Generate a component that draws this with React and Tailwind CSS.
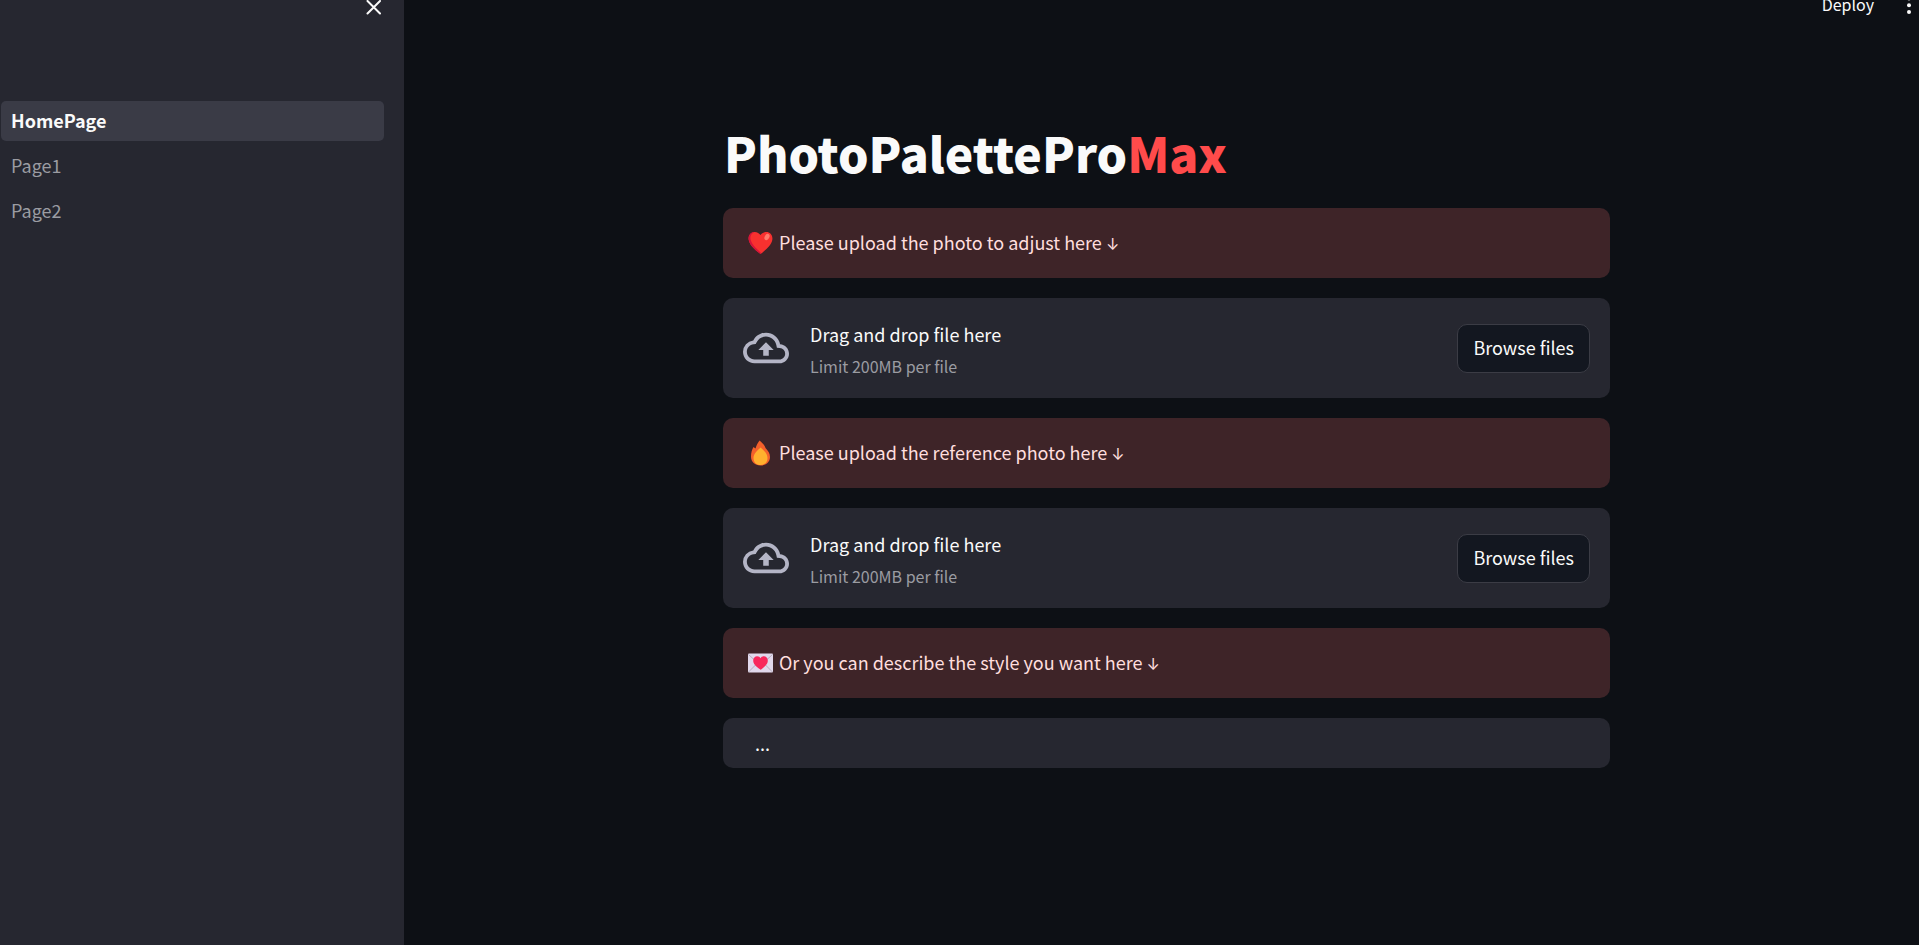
import React from "react";

const pages = [
  { name: "HomePage", active: true },
  { name: "Page1", active: false },
  { name: "Page2", active: false },
];

function CloseIcon() {
  return (
    <svg viewBox="0 0 16 16" className="h-4 w-4" fill="none" stroke="currentColor" strokeWidth="2" strokeLinecap="round">
      <path d="M1.500 1 14 13.500M14 1 1.500 13.500" />
    </svg>
  );
}

function KebabIcon() {
  return (
    <svg viewBox="0 0 6 15" className="h-[15px] w-[6px]" fill="currentColor">
      <circle cx="3" cy="-1.6" r="2" />
      <circle cx="3" cy="5.2" r="2" />
      <circle cx="3" cy="12" r="2" />
    </svg>
  );
}

function HeartIcon() {
  return (
    <svg viewBox="0 0 25 24" className="h-6 w-[25px] shrink-0" aria-hidden="true">
      <path d="M12.5 23C10 21 1 14.500 0.600 8.200C0.300 3.700 3.300 1 6.500 1C9.300 1 11.400 2.500 12.500 4C13.600 2.500 15.700 1 18.500 1C21.700 1 24.700 3.700 24.400 8.200C24 14.500 15 21 12.500 23Z" fill="#f8312f" />
      <path d="M12.500 23C10 21 1 14.500 0.600 8.200C0.300 3.700 3.300 1 6.500 1C3 2.500 1.900 5.500 2.700 9C4.300 14.500 10 19 13.400 22.300Z" fill="#d5123a" />
      <ellipse cx="19" cy="6" rx="2.300" ry="3.300" transform="rotate(28 19 6)" fill="#ff7a6b" />
    </svg>
  );
}

function FireIcon() {
  return (
    <svg viewBox="0 0 25 26" className="h-[26px] w-[25px] shrink-0" aria-hidden="true">
      <path d="M11.500 0.500C15 3.500 16.500 5.500 17.500 8C19.800 10.500 22 13 22 17C22 22.300 17.800 25.500 12.500 25.500C7 25.500 3 22 3 16.500C3 12.500 4 9.500 5.500 7L7.500 8.500C8.500 5.500 9.500 3 11.500 0.500Z" fill="#f3602b" />
      <path d="M12.500 7.500C15.500 10 19.500 13.500 19.500 18C19.500 22.500 16.500 25 12.500 25C8.500 25 5.500 22.500 5.500 18C5.500 13.500 9.500 10.500 12.500 7.500Z" fill="#ffb02e" />
    </svg>
  );
}

function LoveLetterIcon() {
  return (
    <svg viewBox="0 0 25 20" className="h-5 w-[25px] shrink-0" aria-hidden="true">
      <rect x="0" y="0.500" width="25" height="19" rx="1" fill="#e1d8ec" />
      <path d="M0.500 1.500 12.500 12.500 24.500 1.500M0.500 19 9 10.500M24.500 19 16 10.500" fill="none" stroke="#b4acbc" strokeWidth="1" />
      <path d="M12.500 16.800C10.500 15.300 5.200 12 5.200 7.800C5.200 5 7 3.300 9.100 3.300C10.800 3.300 12 4.200 12.500 5.300C13 4.200 14.200 3.300 15.900 3.300C18 3.300 19.800 5 19.800 7.800C19.800 12 14.500 15.300 12.500 16.800Z" fill="#f8285c" />
    </svg>
  );
}

function CloudUploadIcon() {
  return (
    <svg viewBox="0 0 24 24" className="h-[46px] w-[46px] shrink-0 text-[#b4b5c6]" fill="currentColor" aria-hidden="true">
      <path d="M19.350 10.040A7.490 7.490 0 0 0 12 4C9.110 4 6.600 5.640 5.350 8.040A5.994 5.994 0 0 0 0 14c0 3.310 2.690 6 6 6h13c2.760 0 5-2.240 5-5 0-2.640-2.050-4.780-4.650-4.960zM19 18H6c-2.210 0-4-1.790-4-4 0-2.050 1.530-3.760 3.560-3.970l1.070-.110.500-.950A5.469 5.469 0 0 1 12 6c2.620 0 4.880 1.860 5.390 4.430l.300 1.500 1.530.110A2.980 2.980 0 0 1 22 15c0 1.650-1.350 3-3 3zM8 13h2.550v3h2.900v-3H16l-4-4z" />
    </svg>
  );
}

function Notice({ icon, htmlFor, children }) {
  return (
    <label htmlFor={htmlFor} className="flex h-[70px] items-center gap-1.5 rounded-[10px] bg-[#3e2428] px-[25px] text-[#ffdede]">
      {icon}
      <span className="pb-0.5">
        {children} <span className="font-['Inter',sans-serif] text-base">↓</span>
      </span>
    </label>
  );
}

function Uploader({ id }) {
  return (
    <section className="flex h-[100px] items-center rounded-[10px] bg-[#262730] px-5">
      <CloudUploadIcon />
      <div className="ml-[21px] flex flex-col gap-1 pt-[3px]">
        <span className="leading-7">Drag and drop file here</span>
        <small className="text-base leading-7 text-[#9b9ca2]">Limit 200MB per file</small>
      </div>
      <button id={id} type="button" className="ml-auto h-[49px] rounded-[10px] border border-[#3b3c45] bg-[#131720] px-[15px] pb-0.5">
        Browse files
      </button>
    </section>
  );
}

export default function App() {
  return (
    <div className="flex min-h-screen bg-[#0d1015] font-['Noto_Sans_CJK_SC',sans-serif] text-lg text-[#fafafa]">
      <aside className="w-[404px] shrink-0 bg-[#262730]">
        <div className="flex h-[101px] items-start justify-end pr-[22px]">
          <button type="button" aria-label="Close sidebar">
            <CloseIcon />
          </button>
        </div>
        <nav className="flex flex-col gap-[5px] pr-5 pl-px">
          {pages.map((page) => (
            <a
              key={page.name}
              href={"#" + page.name}
              className={
                page.active
                  ? "flex h-10 items-center rounded-[5px] bg-[#3a3b46] px-[10px] pb-0.5 font-bold"
                  : "flex h-10 items-center rounded-[5px] px-[10px] pb-0.5 text-[#9b9ca2]"
              }
            >
              {page.name}
            </a>
          ))}
        </nav>
      </aside>
      <div className="min-w-0 flex-1">
        <header className="flex h-[15px] items-start justify-end gap-[32px] pr-[7px]">
          <button type="button" className="text-base leading-[8px]">
            Deploy
          </button>
          <button type="button" aria-label="Main menu">
            <KebabIcon />
          </button>
        </header>
        <main className="pl-[10px]">
          <div className="mx-auto flex w-full max-w-[887px] flex-col gap-5">
            <h1 className="pt-[104px] pb-[3px] pl-px text-[48px] leading-[66px] font-black">
              PhotoPalettePro<span className="text-[#ff4b4b]">Max</span>
            </h1>
            <Notice icon={<HeartIcon />} htmlFor="photo">Please upload the photo to adjust here</Notice>
            <Uploader id="photo" />
            <Notice icon={<FireIcon />} htmlFor="reference">Please upload the reference photo here</Notice>
            <Uploader id="reference" />
            <Notice icon={<LoveLetterIcon />} htmlFor="style">Or you can describe the style you want here</Notice>
            <input
              id="style"
              type="text"
              defaultValue="..."
              className="h-[50px] w-full rounded-[10px] bg-[#262730] px-8 outline-none"
            />
          </div>
        </main>
      </div>
    </div>
  );
}
